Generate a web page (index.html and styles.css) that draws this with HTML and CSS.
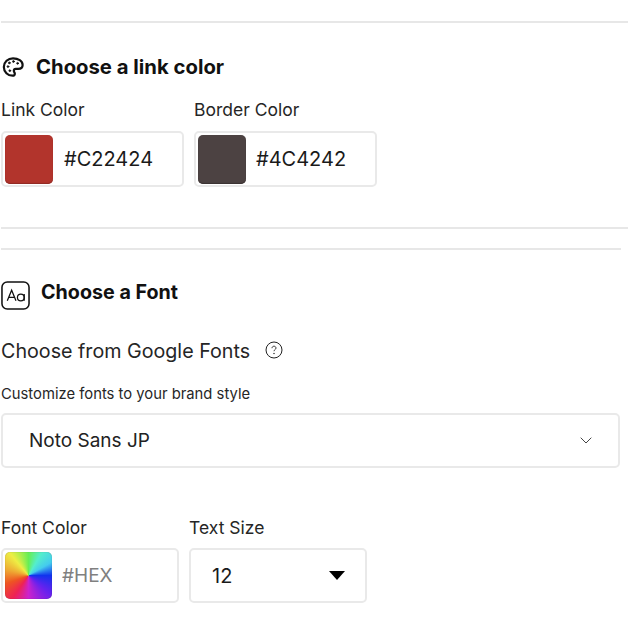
FILE: index.html
```html
<!DOCTYPE html>
<html lang="en">
<head>
<meta charset="utf-8">
<title>Brand settings</title>
<link rel="stylesheet" href="styles.css">
</head>
<body>
<main class="page">
  <hr class="rule rule-top">
  <section class="link-section">
    <h2 class="heading heading-link">
      <svg class="icon-palette" viewBox="0 0 24 24" fill="none" stroke="#111" stroke-width="2.400" stroke-linecap="round" stroke-linejoin="round" aria-hidden="true">
        <path d="M12 2.500C6.500 2.500 2 6.700 2 12s4.300 9.500 9.500 9.500c1.600 0 2.500-1 2.500-2.200 0-.7-.3-1.100-.6-1.600-.3-.5-.5-1-.5-1.500 0-1.200 1-2.100 2.200-2.100h2.600c2.800 0 4.800-1.700 4.800-4.200C22.500 5.600 17.800 2.500 12 2.500z"/>
        <circle cx="6.500" cy="11.500" r="1" fill="#111" stroke-width=".8"/>
        <circle cx="8" cy="7.500" r="1" fill="#111" stroke-width=".8"/>
        <circle cx="12.500" cy="6" r="1" fill="#111" stroke-width=".8"/>
        <circle cx="17" cy="8" r="1" fill="#111" stroke-width=".8"/>
        <circle cx="8.500" cy="16" r="1" fill="#111" stroke-width=".8"/>
      </svg>
      <span>Choose a link color</span>
    </h2>
    <div class="fields fields-link">
      <div class="field">
        <label class="field-label">Link Color</label>
        <div class="color-box box-link">
          <span class="swatch swatch-red"></span>
          <span class="value">#C22424</span>
        </div>
      </div>
      <div class="field">
        <label class="field-label">Border Color</label>
        <div class="color-box box-link">
          <span class="swatch swatch-dark"></span>
          <span class="value">#4C4242</span>
        </div>
      </div>
    </div>
  </section>
  <hr class="rule rule-mid">
  <hr class="rule rule-short">
  <section class="font-section">
    <h2 class="heading heading-font">
      <svg class="icon-aa" viewBox="0 0 30 30" fill="none" stroke="#111" aria-hidden="true">
        <rect x="1" y="1" width="28" height="28" rx="5.500" stroke-width="1.600"/>
        <path d="M6.500 20.500 11 9.500l4.500 11M8 17h6" stroke-width="1.300"/>
        <circle cx="20.500" cy="17" r="3.500" stroke-width="1.300"/>
        <path d="M24 13.500v7" stroke-width="1.300"/>
      </svg>
      <span>Choose a Font</span>
    </h2>
    <div class="google-row">
      <span class="google-label">Choose from Google Fonts</span>
      <svg class="icon-help" viewBox="0 0 18 18" fill="none" stroke="#222" aria-hidden="true">
        <circle cx="9" cy="9" r="8" stroke-width="1"/>
        <path d="M7 7.200c0-1.200.9-2 2-2s2 .8 2 1.900c0 1.400-2 1.500-2 3.100" stroke-width=".9"/>
        <circle cx="9" cy="12.500" r=".5" fill="#222" stroke-width=".4"/>
      </svg>
    </div>
    <p class="hint">Customize fonts to your brand style</p>
    <div class="select-box">
      <span class="select-value">Noto Sans JP</span>
      <svg class="icon-chevron" viewBox="0 0 12 7" fill="none" stroke="#444" stroke-width="1" aria-hidden="true">
        <path d="M.7.700 6 6l5.300-5.300"/>
      </svg>
    </div>
    <div class="fields fields-font">
      <div class="field">
        <label class="field-label">Font Color</label>
        <div class="color-box box-font">
          <span class="swatch swatch-rainbow"></span>
          <span class="value value-empty">#HEX</span>
        </div>
      </div>
      <div class="field">
        <label class="field-label">Text Size</label>
        <div class="size-box">
          <span class="value">12</span>
          <span class="caret"></span>
        </div>
      </div>
    </div>
  </section>
</main>
</body>
</html>
```
FILE: styles.css
```css
* { box-sizing: border-box; }
html, body { margin: 0; padding: 0; background: #fff; }
body {
  font-family: Inter, "Liberation Sans", sans-serif;
  font-optical-sizing: none;
  color: #1a1a1a;
  overflow: hidden;
}
.page { padding: 21px 0 0 1px; height: 642px; }
.rule {
  display: block;
  height: 2px;
  margin: 0;
  border: 0;
  background: #e7e7e7;
}
.rule-top { margin-bottom: 32px; }
.rule-mid { margin-top: 40px; }
.rule-short { margin-top: 19px; width: 620px; }
.font-section { padding-top: 30px; }
.heading {
  display: flex;
  align-items: center;
  margin: 0;
  font-weight: 700;
  color: #111;
}
.heading-link { font-size: 20.3px; line-height: 24px; height: 24px; }
.icon-palette { width: 22px; height: 22px; margin: 0 12px 0 1px; flex: none; }
.heading-font { font-size: 19.7px; line-height: 24px; height: 30px; }
.icon-aa { width: 29px; height: 29px; margin-right: 11px; flex: none; }
.heading-font span { margin-top: -6px; }
.fields { display: flex; }
.fields-link { gap: 10px; margin-top: 20px; }
.fields-font { gap: 10px; margin-top: 49px; }
.field-label {
  display: block;
  font-size: 17.5px;
  line-height: 22px;
  color: #262626;
  margin-bottom: 10px;
}
.fields-font .field-label { margin-bottom: 9px; }
.color-box, .size-box {
  display: flex;
  align-items: center;
  background: #fff;
  border: 2px solid #e9e9e9;
  border-radius: 5px;
  height: 56px;
}
.fields-font .color-box, .fields-font .size-box { height: 55px; }
.box-link { width: 183px; padding-left: 2px; }
.box-font { width: 178px; padding-left: 2px; }
.swatch {
  display: block;
  width: 48px;
  height: 49px;
  border-radius: 5px;
  flex: none;
}
.swatch-red { background: #b2342c; box-shadow: inset 0 -1px 1px #8e2a24; margin-right: 1px; }
.swatch-dark { background: #4c4242; box-shadow: inset 0 -1px 1px #3a3232; }
.swatch-rainbow {
  width: 47px;
  height: 47px;
  background: conic-gradient(from 0deg, #66ee55 0deg, #55eecc 30deg, #44ccee 60deg, #1133ee 90deg, #6622ee 130deg, #cc22cc 180deg, #ee2255 215deg, #ee5522 250deg, #eeaa33 285deg, #eeee44 320deg, #66ee55 360deg);
  box-shadow: inset 0 0 1px rgba(0,0,0,.4);
}
.value { font-size: 20px; line-height: 26px; color: #1a1a1a; margin-left: 10px; }
.value-empty { color: #808080; font-size: 19px; }
.size-box {
  width: 178px;
  padding: 0 20px 0 21px;
  justify-content: space-between;
}
.size-box .value { margin-left: 0; }
.caret {
  width: 0;
  height: 0;
  border-left: 8px solid transparent;
  border-right: 8px solid transparent;
  border-top: 9px solid #000;
}
.google-row { display: flex; align-items: center; margin-top: 28px; }
.google-label { font-size: 19.7px; line-height: 26px; color: #262626; }
.icon-help { width: 18px; height: 18px; margin: -3px 0 0 15px; flex: none; }
.hint { margin: 21px 0 0; font-size: 14.8px; line-height: 18px; color: #262626; }
.select-box {
  display: flex;
  align-items: center;
  justify-content: space-between;
  width: 619px;
  height: 55px;
  margin-top: 10px;
  padding: 0 26px;
  border: 2px solid #e9e9e9;
  border-radius: 5px;
}
.select-value { font-size: 19px; line-height: 26px; color: #222; }
.icon-chevron { width: 12px; height: 7px; flex: none; }
```
